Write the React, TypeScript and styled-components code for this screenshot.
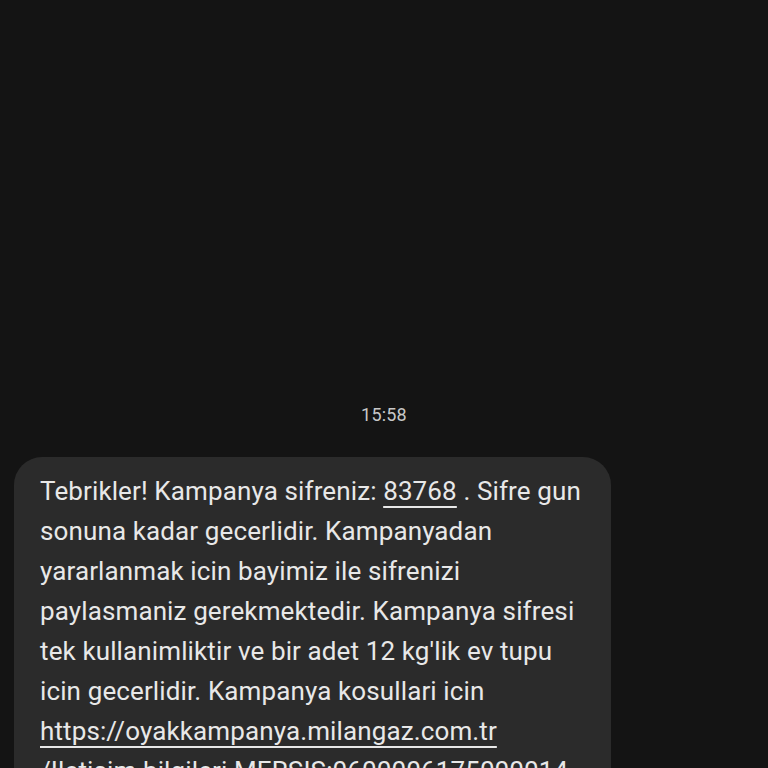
import React from "react";
import styled, { createGlobalStyle } from "styled-components";

const Global = createGlobalStyle`
  html, body { margin: 0; padding: 0; background: #141414; }
  body { font-family: Roboto, "Noto Sans", "Liberation Sans", sans-serif; }
`;

const Screen = styled.div`
  width: 768px;
  height: 768px;
  overflow: hidden;
  background: #141414;
  display: flex;
  flex-direction: column;
  align-items: center;
  padding-top: 403px;
  box-sizing: border-box;
`;

const Time = styled.div`
  font-size: 18px;
  line-height: 24px;
  color: #c8c8c8;
  letter-spacing: 0.2px;
`;

const Thread = styled.div`
  align-self: stretch;
  display: flex;
  padding: 30px 0 0 14px;
`;

const Bubble = styled.div`
  width: 597px;
  box-sizing: border-box;
  background: #2b2b2b;
  border-radius: 28px;
  padding: 14px 20px 20px 26px;
  color: #e8e8e8;
  font-size: 26px;
  line-height: 40px;
  letter-spacing: 0.12px;
`;

const Line = styled.div`
  white-space: nowrap;
`;

const Link = styled.span`
  text-decoration: underline;
  text-decoration-thickness: 2px;
  text-underline-offset: 6px;
`;

export default function App() {
  return (
    <>
      <Global />
      <Screen>
        <Time>15:58</Time>
        <Thread>
          <Bubble>
            <Line>
              Tebrikler! Kampanya sifreniz: <Link>83768</Link> . Sifre gun
            </Line>
            <Line>sonuna kadar gecerlidir. Kampanyadan</Line>
            <Line>yararlanmak icin bayimiz ile sifrenizi</Line>
            <Line>paylasmaniz gerekmektedir. Kampanya sifresi</Line>
            <Line>tek kullanimliktir ve bir adet 12 kg'lik ev tupu</Line>
            <Line>icin gecerlidir. Kampanya kosullari icin</Line>
            <Line>
              <Link>https://oyakkampanya.milangaz.com.tr</Link>
            </Line>
            <Line>/Iletisim bilgileri MERSIS:0600006175000014</Line>
          </Bubble>
        </Thread>
      </Screen>
    </>
  );
}
